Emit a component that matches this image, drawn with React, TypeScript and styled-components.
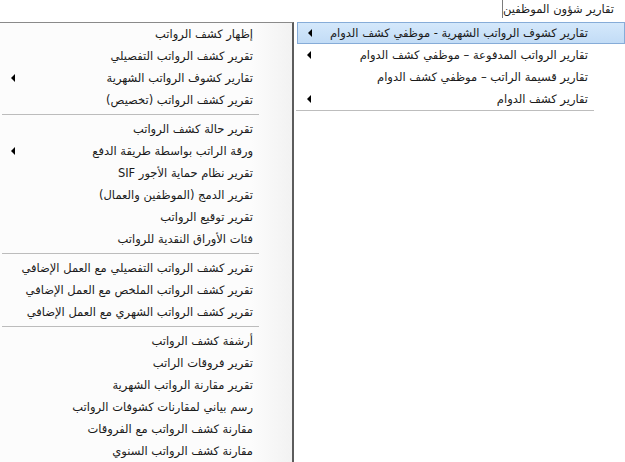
import React, { FC } from "react";
import styled, { createGlobalStyle } from "styled-components";

const GlobalStyle = createGlobalStyle`
  html, body {
    margin: 0;
    padding: 0;
    background: #ffffff;
  }
  body {
    font-family: "DejaVu Sans", "Noto Sans", sans-serif;
  }
`;

type Entry = { label: string; sub?: boolean } | "sep";

const leftItems: Entry[] = [
  { label: "إظهار كشف الرواتب" },
  { label: "تقرير كشف الرواتب التفصيلي" },
  { label: "تقارير كشوف الرواتب الشهرية", sub: true },
  { label: "تقرير كشف الرواتب (تخصيص)" },
  "sep",
  { label: "تقرير حالة كشف الرواتب" },
  { label: "ورقة الراتب بواسطة طريقة الدفع", sub: true },
  { label: "تقرير نظام حماية الأجور SIF" },
  { label: "تقرير الدمج (الموظفين والعمال)" },
  { label: "تقرير توقيع الرواتب" },
  { label: "فئات الأوراق النقدية للرواتب" },
  "sep",
  { label: "تقرير كشف الرواتب التفصيلي مع العمل الإضافي" },
  { label: "تقرير كشف الرواتب الملخص مع العمل الإضافي" },
  { label: "تقرير كشف الرواتب الشهري مع العمل الإضافي" },
  "sep",
  { label: "أرشفة كشف الرواتب" },
  { label: "تقرير فروقات الراتب" },
  { label: "تقرير مقارنة الرواتب الشهرية" },
  { label: "رسم بياني لمقارنات كشوفات الرواتب" },
  { label: "مقارنة كشف الرواتب مع الفروقات" },
  { label: "مقارنة كشف الرواتب السنوي" },
];

const rightItems = [
  { label: "تقارير كشوف الرواتب الشهرية - موظفي كشف الدوام", sub: true },
  { label: "تقارير الرواتب المدفوعة – موظفي كشف الدوام", sub: true },
  { label: "تقارير قسيمة الراتب – موظفي كشف الدوام", sub: false },
  { label: "تقارير كشف الدوام", sub: true },
];

const Page = styled.div`
  width: 625px;
  height: 462px;
  overflow: hidden;
  display: flex;
  flex-direction: column;
  background: #ffffff;
`;

const TopBar = styled.div`
  height: 22px;
  display: flex;
  justify-content: flex-end;
  flex-shrink: 0;
`;

const HeaderItem = styled.div`
  width: 123px;
  height: 18px;
  border-left: 1px solid #7c7c7c;
  display: flex;
  align-items: center;
  justify-content: flex-end;
  padding-right: 7px;
  box-sizing: border-box;
  font-size: 11.5px;
  color: #1a1a1a;
  direction: rtl;
  white-space: nowrap;
`;

const Body = styled.div`
  flex: 1;
  display: flex;
  align-items: flex-start;
  gap: 2px;
`;

const LeftMenu = styled.div`
  width: 292px;
  height: 440px;
  border-top: 1px solid #8a8a8a;
  border-right: 2px solid #5c5c5c;
  background: linear-gradient(to right, #fcfcfc 0%, #fcfcfc 86%, #f2f2f2 100%);
  display: flex;
  flex-direction: column;
  flex-shrink: 0;
`;

const RightMenu = styled.div`
  flex: 1;
  display: flex;
  flex-direction: column;
  background: #ffffff;
`;

const Row = styled.div<{ $pad: number; $active?: boolean }>`
  height: 22px;
  flex-shrink: 0;
  display: flex;
  flex-direction: row-reverse;
  align-items: center;
  justify-content: space-between;
  padding-right: ${({ $pad }) => $pad}px;
  padding-left: 10px;
  box-sizing: border-box;
  font-size: 11.5px;
  color: #1a1a1a;
  white-space: nowrap;
  ${({ $active }) =>
    $active
      ? `
    background: linear-gradient(to bottom, #d4e8fb 0%, #c2dcf6 100%);
    border: 1px solid #86acd8;
    margin-left: 1px;
  `
      : "border: 1px solid transparent;"}
`;

const Label = styled.span`
  direction: rtl;
`;

const Arrow = styled.span`
  width: 0;
  height: 0;
  border-top: 4px solid transparent;
  border-bottom: 4px solid transparent;
  border-right: 4px solid #000000;
`;

const Separator = styled.div`
  height: 7px;
  flex-shrink: 0;
  display: flex;
  align-items: center;
  padding-left: 2px;
  padding-right: 33px;
  &::after {
    content: "";
    flex: 1;
    height: 1px;
    background: #bcbcbc;
  }
`;

const BottomLine = styled.div`
  height: 1px;
  margin-right: 31px;
  background: #bdbdbd;
`;

const MenuRows: FC<{ items: Entry[]; pad: number }> = ({ items, pad }) => (
  <>
    {items.map((it, i) =>
      it === "sep" ? (
        <Separator key={i} />
      ) : (
        <Row key={i} $pad={pad}>
          <Label>{it.label}</Label>
          {it.sub ? <Arrow /> : <span />}
        </Row>
      )
    )}
  </>
);

export default function App() {
  return (
    <>
      <GlobalStyle />
      <Page>
        <TopBar>
          <HeaderItem>تقارير شؤون الموظفين</HeaderItem>
        </TopBar>
        <Body>
          <LeftMenu>
            <MenuRows items={leftItems} pad={38} />
          </LeftMenu>
          <RightMenu>
            {rightItems.map((it, i) => (
              <Row key={i} $pad={36} $active={i === 0}>
                <Label>{it.label}</Label>
                {it.sub ? <Arrow /> : <span />}
              </Row>
            ))}
            <BottomLine />
          </RightMenu>
        </Body>
      </Page>
    </>
  );
}
